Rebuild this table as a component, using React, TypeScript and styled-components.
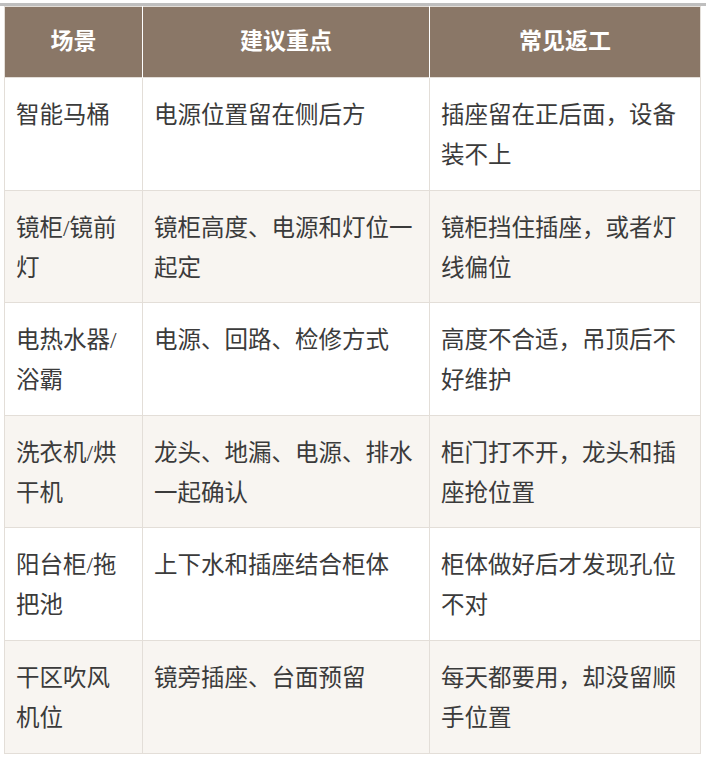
import React from 'react';
import styled, { createGlobalStyle } from 'styled-components';

const GlobalStyle = createGlobalStyle`
  body {
    margin: 0;
    background: #ffffff;
    font-family: "Liberation Serif", "Noto Sans CJK SC", serif;
  }
`;

const Page = styled.div`
  margin-top: 3px;
  border-top: 3px solid #bfbfbf;
  padding: 0 6px 0 4px;
`;

const Table = styled.table`
  width: 696px;
  border-collapse: collapse;
  table-layout: fixed;
  border: 1px solid #e3ded8;
`;

const HeadCell = styled.th<{ $width: number }>`
  box-sizing: border-box;
  width: ${(p) => p.$width}px;
  height: 71px;
  background: #8a7767;
  color: #ffffff;
  font-weight: 700;
  font-size: 23px;
  line-height: 40px;
  padding: 15px 12px;
  text-align: center;
  border-left: 1px solid #ffffff;
  font-family: "Liberation Serif", "Noto Sans CJK SC", serif;

  &:first-child {
    border-left: none;
  }
`;

const Row = styled.tr<{ $alt: boolean }>`
  background: ${(p) => (p.$alt ? '#f8f5f1' : '#ffffff')};
`;

const Cell = styled.td`
  box-sizing: border-box;
  border: 1px solid #e3ded8;
  padding: 17px 11px 14px;
  font-size: 23.5px;
  line-height: 40px;
  color: #3b3b3b;
  vertical-align: top;
  height: 112.6px;
  word-break: break-all;
`;

const rows = [
  ['智能马桶', '电源位置留在侧后方', '插座留在正后面，设备装不上'],
  ['镜柜/镜前灯', '镜柜高度、电源和灯位一起定', '镜柜挡住插座，或者灯线偏位'],
  ['电热水器/浴霸', '电源、回路、检修方式', '高度不合适，吊顶后不好维护'],
  ['洗衣机/烘干机', '龙头、地漏、电源、排水一起确认', '柜门打不开，龙头和插座抢位置'],
  ['阳台柜/拖把池', '上下水和插座结合柜体', '柜体做好后才发现孔位不对'],
  ['干区吹风机位', '镜旁插座、台面预留', '每天都要用，却没留顺手位置'],
];

const App: React.FC = () => {
  return (
    <>
      <GlobalStyle />
      <Page>
        <Table>
          <thead>
            <tr>
              <HeadCell $width={138}>场景</HeadCell>
              <HeadCell $width={287}>建议重点</HeadCell>
              <HeadCell $width={271}>常见返工</HeadCell>
            </tr>
          </thead>
          <tbody>
            {rows.map((r, i) => (
              <Row key={i} $alt={i % 2 === 1}>
                <Cell>{r[0]}</Cell>
                <Cell>{r[1]}</Cell>
                <Cell>{r[2]}</Cell>
              </Row>
            ))}
          </tbody>
        </Table>
      </Page>
    </>
  );
};

export default App;
